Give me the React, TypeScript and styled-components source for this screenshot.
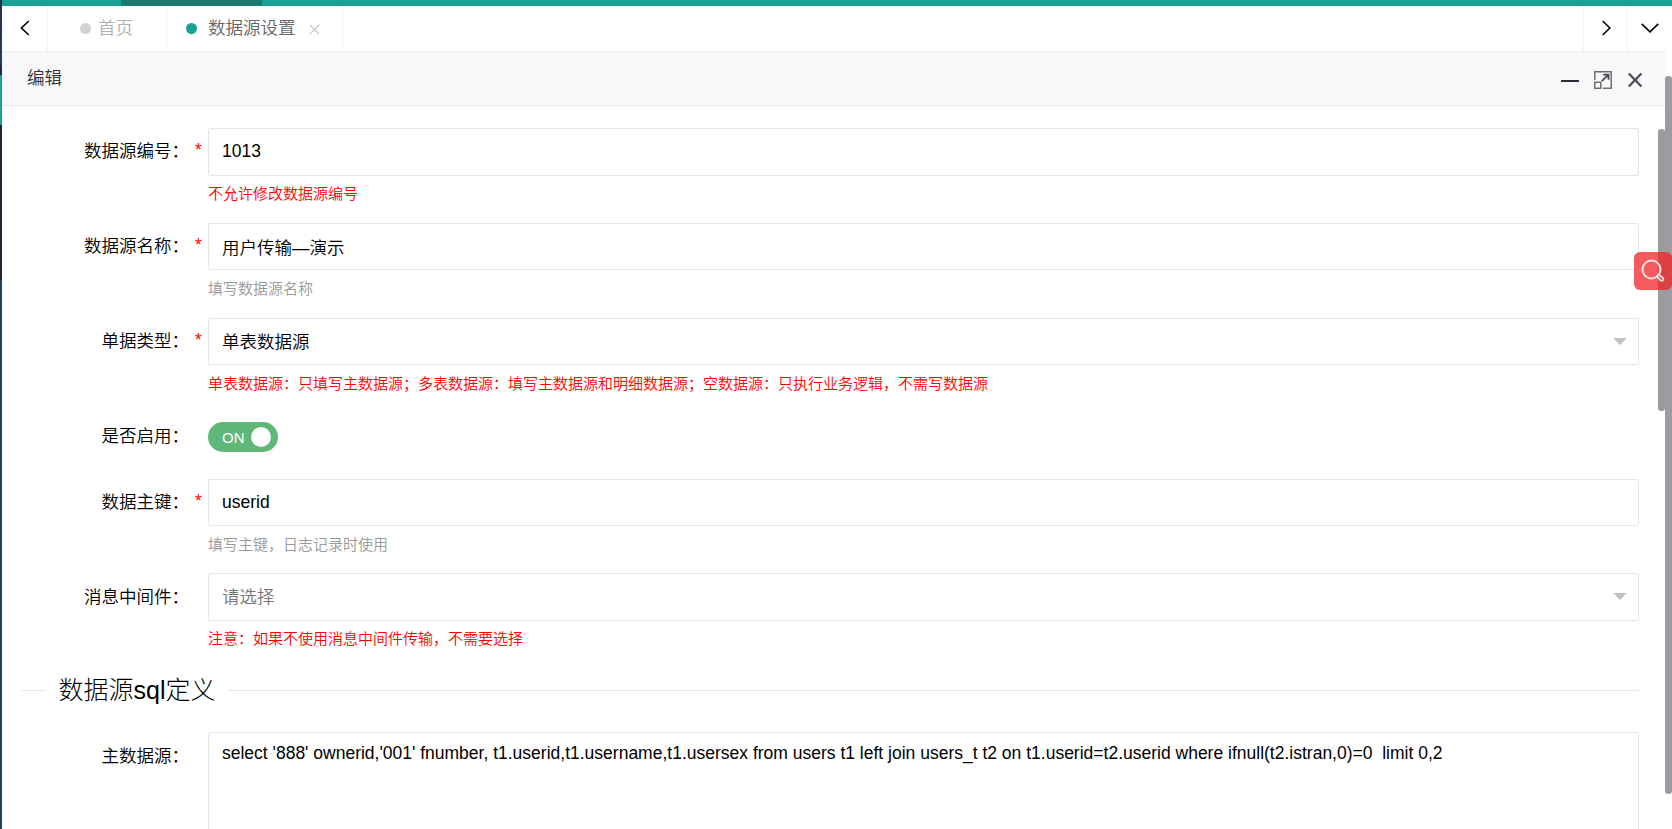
import React from "react";
import styled, { createGlobalStyle } from "styled-components";

const Global = createGlobalStyle`
  * { box-sizing: border-box; }
  body {
    margin: 0;
    overflow: hidden;
    background: #fff;
    font-family: "Liberation Sans", "Noto Sans CJK SC", sans-serif;
    font-size: 17.5px;
    font-weight: 350;
    color: #000;
  }
`;

const Screen = styled.div`
  position: relative;
  display: flex;
  width: 1672px;
  height: 829px;
  overflow: hidden;
`;

const Rail = styled.div`
  display: flex;
  flex-direction: column;
  width: 2px;
  flex: none;
`;

const RailPart = styled.div<{ $h?: number; $bg: string }>`
  flex: ${(p) => (p.$h ? "none" : "1")};
  height: ${(p) => (p.$h ? p.$h + "px" : "auto")};
  background: ${(p) => p.$bg};
`;

const Main = styled.div`
  display: flex;
  flex-direction: column;
  flex: 1;
  min-width: 0;
`;

const TopBar = styled.div`
  height: 6px;
  flex: none;
  padding-left: 119px;
  background: #1aa094;
`;

const TopBarActive = styled.div`
  width: 141px;
  height: 6px;
  background: #1a7a70;
`;

const TabBar = styled.div`
  display: flex;
  flex: none;
  height: 45px;
  background: #fff;
`;

const NavButton = styled.div<{ $w: number; $side: "left" | "right" }>`
  display: flex;
  align-items: center;
  justify-content: center;
  width: ${(p) => p.$w}px;
  padding-bottom: 1px;
  border-${(p) => (p.$side === "left" ? "right" : "left")}: 1px solid #f2f2f2;
`;

const Tab = styled.div<{ $w: number; $pad: number; $color: string }>`
  display: flex;
  align-items: center;
  width: ${(p) => p.$w}px;
  padding: 0 0 1px ${(p) => p.$pad}px;
  border-right: 1px solid #f2f2f2;
  color: ${(p) => p.$color};
  line-height: 26px;
  white-space: nowrap;
`;

const Dot = styled.span<{ $color: string; $gap: number }>`
  width: 11px;
  height: 11px;
  margin: 0 ${(p) => p.$gap}px 0 0;
  border-radius: 50%;
  background: ${(p) => p.$color};
`;

const TabClose = styled.svg`
  margin: 3px 0 0 13px;
`;

const Spacer = styled.div`
  flex: 1;
`;

const TitleBar = styled.div`
  display: flex;
  flex: none;
  justify-content: space-between;
  width: 1663px;
  height: 55px;
  padding: 0 22px 0 25px;
  border-top: 1px solid #f0f0f0;
  border-bottom: 1px solid #eaeaea;
  background: #f8f8f8;
  color: #333;
  line-height: 53px;
`;

const WindowTools = styled.div`
  display: flex;
  align-items: center;
  gap: 15px;
  padding-top: 3px;
`;

const Form = styled.div`
  flex: 1;
  min-height: 0;
  padding: 22px 33px 0 0;
  overflow: hidden;
`;

const Row = styled.div<{ $h: number }>`
  display: flex;
  height: ${(p) => p.$h}px;
`;

const Label = styled.label<{ $line: number }>`
  width: 187px;
  flex: none;
  line-height: ${(p) => p.$line}px;
  text-align: right;
`;

const Required = styled.span`
  width: 19px;
  flex: none;
  padding-left: 6px;
  line-height: 45px;
  color: #f00;
`;

const Field = styled.div`
  flex: 1;
  min-width: 0;
`;

const Box = styled.div<{ $h?: number; $muted?: boolean; $shift?: number }>`
  display: flex;
  align-items: center;
  justify-content: space-between;
  height: ${(p) => p.$h ?? 47}px;
  padding: ${(p) => Math.max(p.$shift ?? 0, 0)}px 11px ${(p) => Math.max(-(p.$shift ?? 0), 0)}px 13px;
  border: 1px solid #e6e6e6;
  border-radius: 2px;
  background: #fff;
  color: ${(p) => (p.$muted ? "#757575" : "#000")};
  line-height: 26px;
`;

const Caret = styled.span`
  margin-bottom: 1px;
  border: 7.5px solid transparent;
  border-top: 7px solid #c2c2c2;
  border-bottom-width: 0;
`;

const Hint = styled.div<{ $warn?: boolean; $top?: number }>`
  margin-top: ${(p) => p.$top ?? 6}px;
  font-size: 15px;
  line-height: 25px;
  color: ${(p) => (p.$warn ? "#f00" : "#999")};
`;

const Switch = styled.div`
  display: flex;
  align-items: center;
  justify-content: space-between;
  width: 70px;
  height: 30px;
  margin-top: 9px;
  padding: 0 7px 0 14px;
  border-radius: 15px;
  background: #5fb878;
  color: #fff;
  font-size: 15px;
`;

const Knob = styled.span`
  width: 20px;
  height: 20px;
  border-radius: 50%;
  background: #fff;
`;

const Legend = styled.div`
  display: flex;
  align-items: center;
  height: 38px;
  margin: 3px 0 23px 19px;
  gap: 12.5px;
  font-size: 25px;
  font-weight: 300;
  line-height: 38px;
  white-space: nowrap;
`;

const Rule = styled.span<{ $w?: number }>`
  flex: ${(p) => (p.$w ? "none" : "1")};
  width: ${(p) => (p.$w ? p.$w + "px" : "auto")};
  height: 1px;
  background: #e6e6e6;
`;

const TextArea = styled.div`
  height: 125px;
  padding: 7px 13px;
  border: 1px solid #e6e6e6;
  border-radius: 2px;
  line-height: 26px;
  white-space: pre;
`;

const Scrollbar = styled.div<{ $right: number; $top: number; $h: number }>`
  position: absolute;
  top: ${(p) => p.$top}px;
  right: ${(p) => p.$right}px;
  width: 7px;
  height: ${(p) => p.$h}px;
  border-radius: 3px;
  background: #9b9ca0;
`;

const SearchBadge = styled.div`
  position: absolute;
  top: 252px;
  right: 0;
  width: 38px;
  height: 38px;
  border-radius: 6px;
  background: rgba(241, 33, 35, 0.74);
`;

type FieldRowProps = {
  label: string;
  height?: number;
  labelLine?: number;
  required?: boolean;
  children: React.ReactNode;
};

const FieldRow = ({ label, height = 95, labelLine = 47, required, children }: FieldRowProps) => (
  <Row $h={height}>
    <Label $line={labelLine}>{label}</Label>
    <Required>{required ? "*" : ""}</Required>
    <Field>{children}</Field>
  </Row>
);

export default function App() {
  return (
    <>
      <Global />
      <Screen>
        <Rail>
          <RailPart $h={75} $bg="linear-gradient(#22304a, #2b3d5c 60px, #1c2636)" />
          <RailPart $h={50} $bg="#1aa094" />
          <RailPart $h={155} $bg="#1c2636" />
          <RailPart $bg="#2b3d5c" />
        </Rail>
        <Main>
          <TopBar>
            <TopBarActive />
          </TopBar>
          <TabBar>
            <NavButton $w={46} $side="left">
              <svg width="11" height="16" viewBox="0 0 11 16" fill="none" stroke="#000" strokeWidth="1.6">
                <path d="M9.8 1 2.4 8l7.4 7" />
              </svg>
            </NavButton>
            <Tab $w={119} $pad={32} $color="#b0b0b0">
              <Dot $color="#d2d2d2" $gap={7} />
              首页
            </Tab>
            <Tab $w={176} $pad={19} $color="#666">
              <Dot $color="#1aa094" $gap={11} />
              数据源设置
              <TabClose width="11" height="11" viewBox="0 0 11 11" stroke="#c2c2c2" strokeWidth="1.2">
                <path d="M.8.8l9.4 9.4M10.2.8.8 10.2" />
              </TabClose>
            </Tab>
            <Spacer />
            <NavButton $w={44} $side="right">
              <svg width="10" height="16" viewBox="0 0 10 16" fill="none" stroke="#000" strokeWidth="1.6">
                <path d="M1.7 1l7.2 7-7.2 7" />
              </svg>
            </NavButton>
            <NavButton $w={45} $side="right">
              <svg width="18" height="10" viewBox="0 0 18 10" fill="none" stroke="#000" strokeWidth="1.6">
                <path d="M.7.9 9 8.9 17.3.9" />
              </svg>
            </NavButton>
          </TabBar>
          <TitleBar>
            <span>编辑</span>
            <WindowTools>
              <svg width="18" height="18" viewBox="0 0 18 18">
                <path d="M0 10h18" stroke="#2d2c3b" strokeWidth="2" />
              </svg>
              <svg width="18" height="18" viewBox="0 0 18 18" fill="none" stroke="#6d6c78" strokeWidth="1.5">
                <path d="M.8 9V.8h16.4v16.4H9" />
                <path d="M.8 11.2h6v6h-6z" />
                <path d="M7.8 10.2l6.6-6.6M9.3 3.6h5.2v5.2" stroke="#4a4956" strokeWidth="1.8" />
              </svg>
              <svg width="16" height="16" viewBox="0 0 16 16" stroke="#4a4956" strokeWidth="2.2">
                <path d="M1.8 1.5l12.6 13M14.4 1.5l-12.6 13" />
              </svg>
            </WindowTools>
          </TitleBar>
          <Form>
            <FieldRow label="数据源编号：" required>
              <Box $h={48} $shift={-2}>1013</Box>
              <Hint $warn $top={5}>不允许修改数据源编号</Hint>
            </FieldRow>
            <FieldRow label="数据源名称：" required>
              <Box $shift={2}>用户传输—演示</Box>
              <Hint>填写数据源名称</Hint>
            </FieldRow>
            <FieldRow label="单据类型：" required>
              <Box>
                单表数据源
                <Caret />
              </Box>
              <Hint $warn>
                单表数据源：只填写主数据源；多表数据源：填写主数据源和明细数据源；空数据源：只执行业务逻辑，不需写数据源
              </Hint>
            </FieldRow>
            <FieldRow label="是否启用：" height={66}>
              <Switch>
                ON
                <Knob />
              </Switch>
            </FieldRow>
            <FieldRow label="数据主键：" height={94} required>
              <Box $shift={-2}>userid</Box>
              <Hint>填写主键，日志记录时使用</Hint>
            </FieldRow>
            <FieldRow label="消息中间件：" labelLine={49}>
              <Box $h={48} $muted>
                请选择
                <Caret />
              </Box>
              <Hint $warn $top={5}>注意：如果不使用消息中间件传输，不需要选择</Hint>
            </FieldRow>
            <Legend>
              <Rule $w={25} />
              数据源sql定义
              <Rule />
            </Legend>
            <FieldRow label="主数据源：" labelLine={49}>
              <TextArea>
                {"select '888' ownerid,'001' fnumber, t1.userid,t1.username,t1.usersex from users t1 left join users_t t2 on t1.userid=t2.userid where ifnull(t2.istran,0)=0  limit 0,2"}
              </TextArea>
            </FieldRow>
          </Form>
        </Main>
        <Scrollbar $right={0} $top={76} $h={718} />
        <Scrollbar $right={7} $top={129} $h={282} />
        <SearchBadge>
          <svg width="38" height="38" viewBox="0 0 38 38" fill="none" stroke="#fbe4e4" strokeWidth="2">
            <circle cx="17.5" cy="17.5" r="9" />
            <path d="M22.8 24.2l1.9-1.9 4.2 3.6a1.7 1.7 0 0 1-2.3 2.5z" strokeWidth="1.7" />
          </svg>
        </SearchBadge>
      </Screen>
    </>
  );
}
